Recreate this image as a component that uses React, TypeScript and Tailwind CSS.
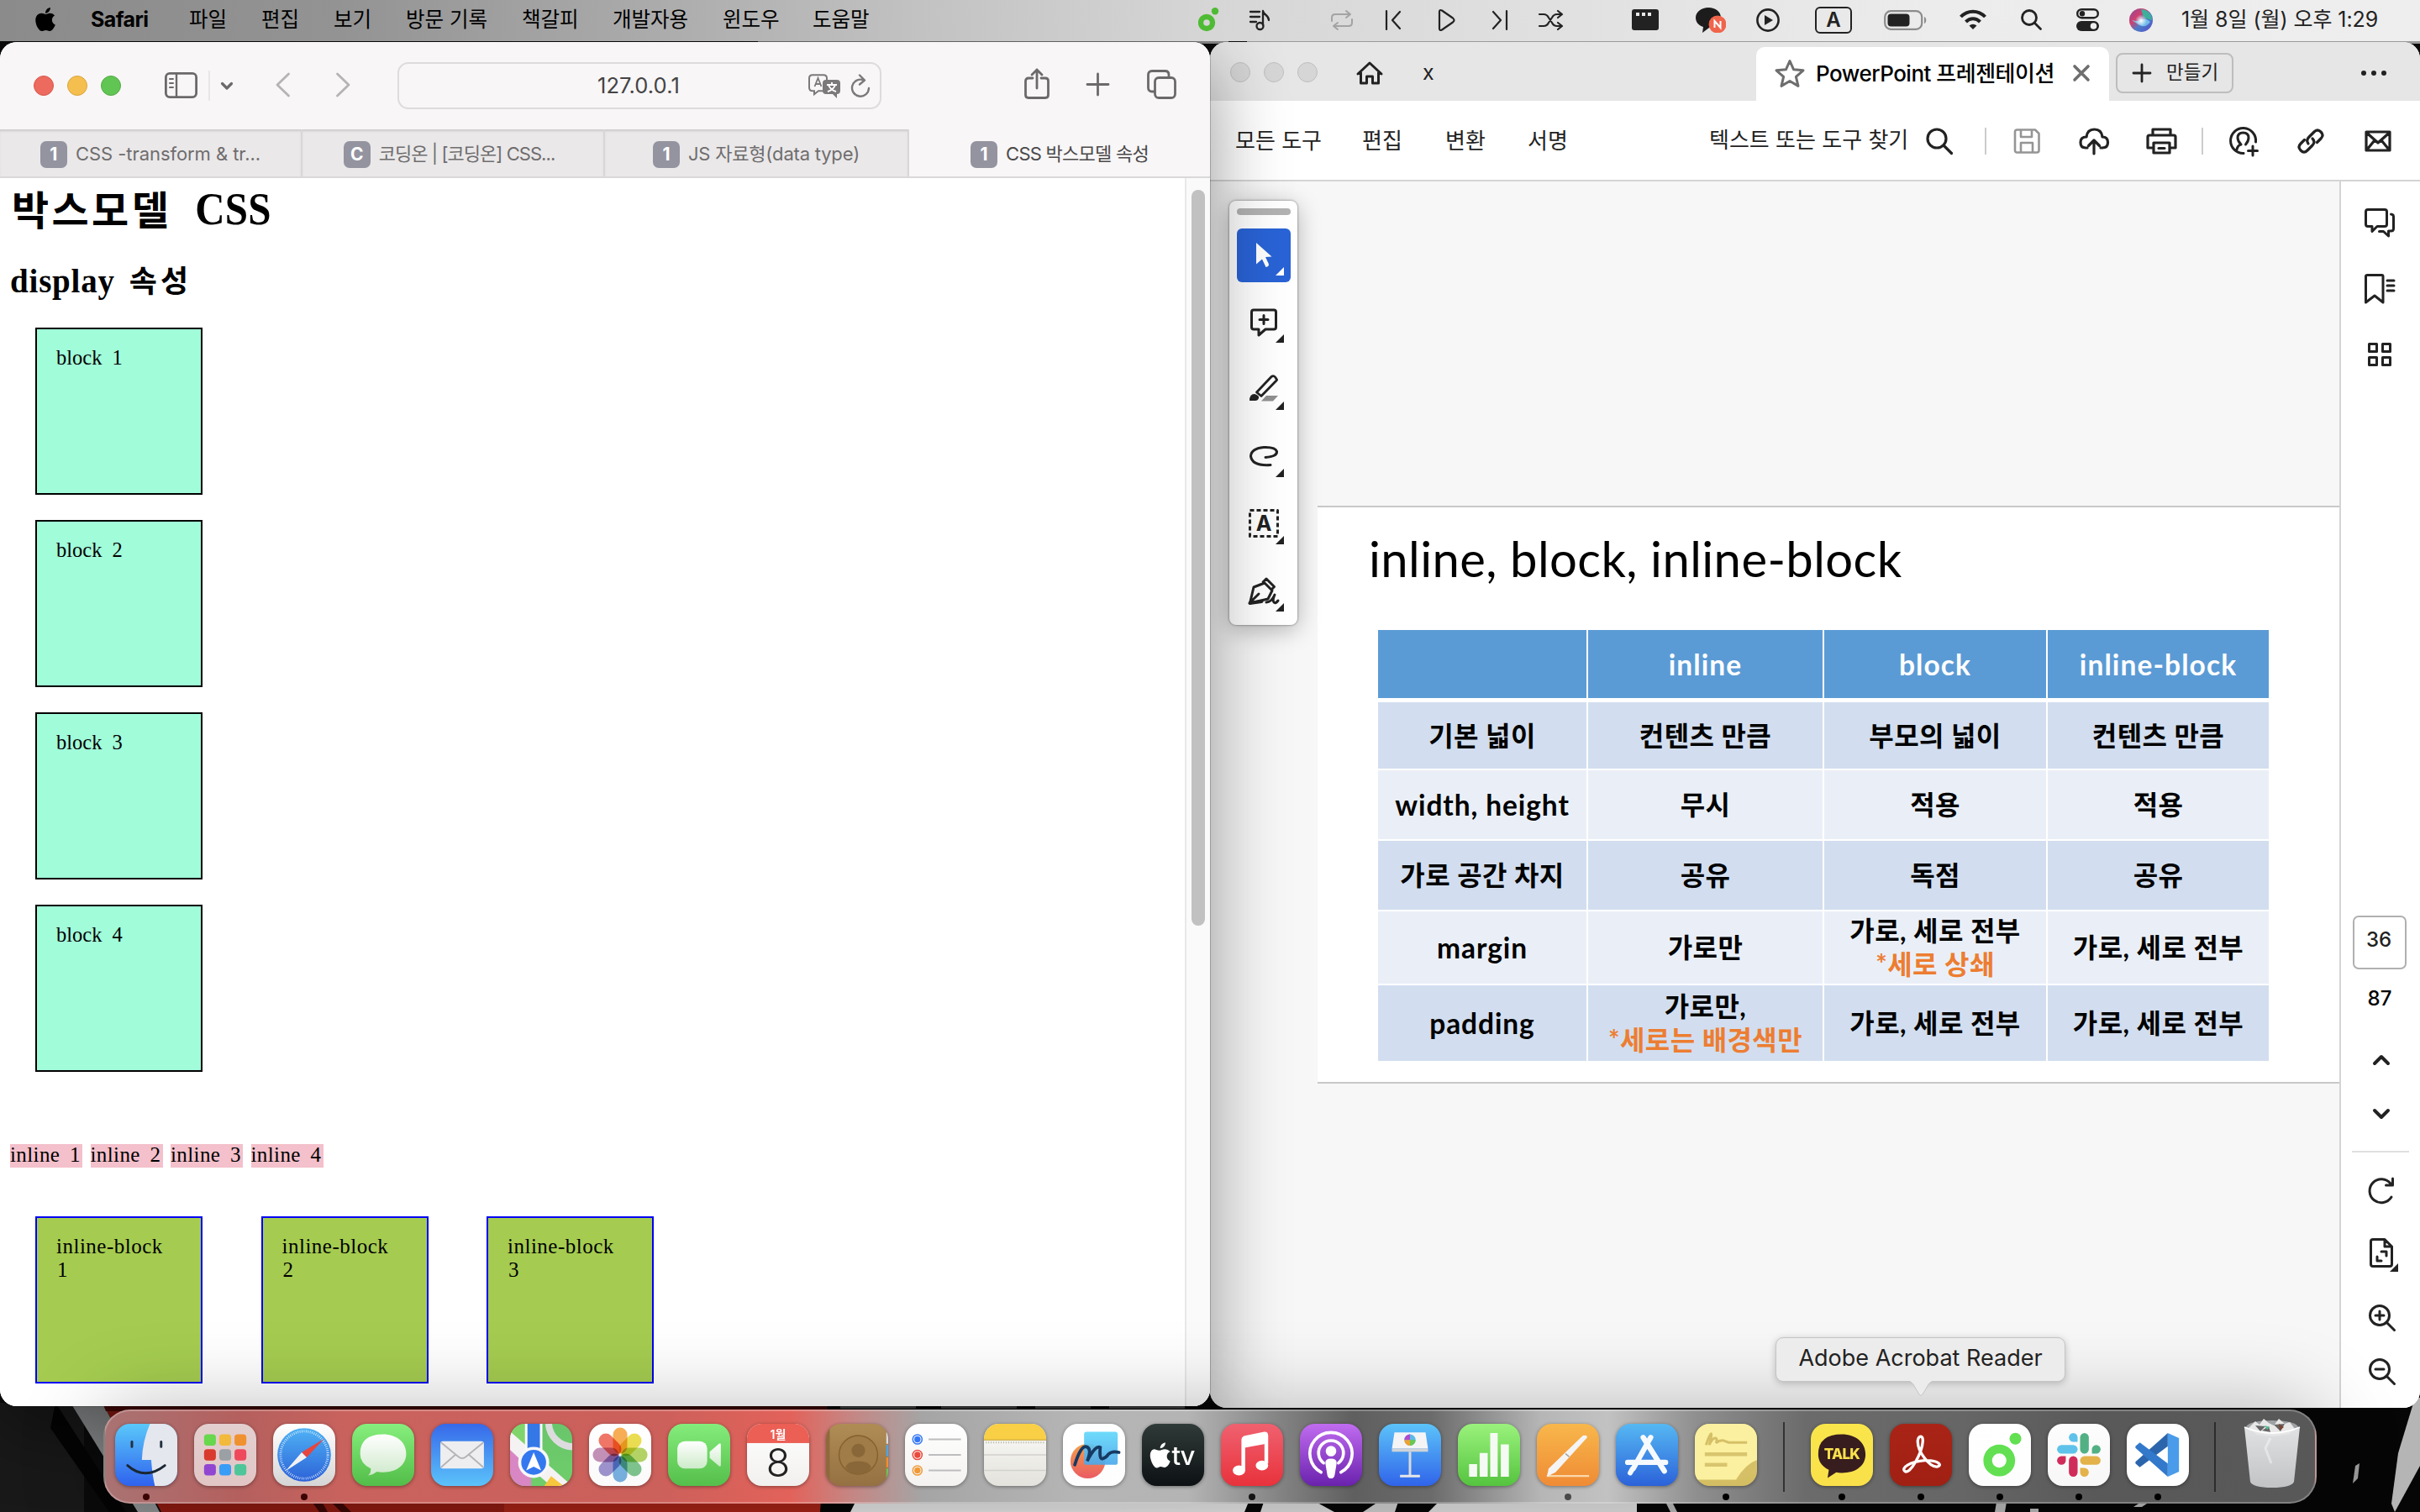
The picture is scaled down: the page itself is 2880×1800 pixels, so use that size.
import React from "react";
import { FaApple } from "react-icons/fa";

type IconProps = {
  w: number;
  h: number;
  sw?: number;
  className?: string;
  children: React.ReactNode;
};

/* Stroke icon whose drawing units are screen pixels. */
function Ico({ w, h, sw = 2.6, className = "", children }: IconProps) {
  return (
    <svg
      width={w}
      height={h}
      viewBox={`0 0 ${w} ${h}`}
      fill="none"
      stroke="currentColor"
      strokeWidth={sw}
      strokeLinecap="round"
      strokeLinejoin="round"
      className={`block shrink-0 overflow-visible ${className}`}
    >
      {children}
    </svg>
  );
}

/* ---------------------------------------------------------------- wallpaper */

function Wallpaper() {
  return (
    <svg className="absolute inset-0" width="2880" height="1800" viewBox="0 0 2880 1800">
      <rect width="2880" height="1800" fill="#0b0b0b" />
      <rect x="902" y="46" width="560" height="6" fill="#8a8a8a" />
      <rect x="1484" y="46" width="1396" height="6" fill="#9a9a9a" />
      <rect x="0" y="1670" width="100" height="130" fill="#191919" />
      <path d="M66 1670 L150 1800 L130 1800 L60 1700 Z" fill="#050505" />
      <path d="M84 1670 L122 1670 L190 1800 L164 1800 Z" fill="#8d8f90" />
      <path d="M122 1670 L985 1670 L978 1800 L192 1800 Z" fill="#8d1b12" />
      <path d="M122 1670 H985 V1680 H126 Z" fill="#4a0a07" />
      <path d="M600 1790 H978 V1800 H600 Z" fill="#a52417" />
      <path d="M370 1786 l10 14 h10 l-8 -14 Z M392 1786 l14 14 h12 l-14 -14 Z" fill="#3c0705" />
      <path d="M985 1670 H2880 V1800 H976 Z" fill="#060606" />
      <path d="M1000 1672 H1090 V1677 H1000 Z M1120 1672 H1210 V1677 H1120 Z M1232 1672 H1298 V1677 H1232 Z M1320 1672 H1410 V1677 H1320 Z" fill="#4c4c4c" />
      <path d="M1018 1788 H1486 L1481 1800 H1012 Z" fill="#e4e4e4" />
      <path d="M1504 1788 H1566 L1588 1800 H1500 Z" fill="#dcdcdc" />
      <path d="M1640 1788 H1664 L1660 1800 H1622 Z" fill="#d0d0d0" />
      <path d="M1712 1788 H1948 V1800 H1700 Z" fill="#e0e0e0" />
      <path d="M1982 1788 h8 l6 12 h-8 Z M2376 1788 h12 l-2 12 h-12 Z M2545 1790 h10 l-6 4 h-10 Z M2416 1796 h10 v4 h-10 Z" fill="#b9b9b9" />
      <path d="M2874 1664 L2880 1664 L2880 1745 L2850 1800 L2846 1790 L2854 1730 Z" fill="#b5b5b5" />
      <path d="M2803 1745 l5 -3 l-2 18 l-6 6 Z" fill="#9c9c9c" />
    </svg>
  );
}

/* ----------------------------------------------------------------- menu bar */

function MenuBar() {
  return (
    <header className="relative z-30 flex h-[49px] items-center bg-[linear-gradient(90deg,#8b8b8b_0%,#939393_14%,#a9a9a9_26%,#c2c2c2_38%,#d6d6d6_50%,#e0e0e0_64%,#ececec_80%,#eeeeee_100%)] pb-[2px] font-['Inter','Noto_Sans_CJK_KR',sans-serif] text-[24.5px] text-black">
      <FaApple className="ml-[40px] -mt-[2px] h-[32px] w-[28px]" />
      <b className="ml-[40px] w-[117px] text-[25px] tracking-[-0.6px]">Safari</b>
      <span className="w-[86px] whitespace-nowrap">파일</span>
      <span className="w-[86px] whitespace-nowrap">편집</span>
      <span className="w-[86px] whitespace-nowrap">보기</span>
      <span className="w-[138px] whitespace-nowrap">방문 기록</span>
      <span className="w-[108px] whitespace-nowrap">책갈피</span>
      <span className="w-[131px] whitespace-nowrap">개발자용</span>
      <span className="w-[107px] whitespace-nowrap">윈도우</span>
      <span className="w-[68px] whitespace-nowrap">도움말</span>

      <div className="ml-[391px] flex items-center text-[#222]">
        <svg width="25" height="29" viewBox="0 0 25 29" className="block">
          <circle cx="10" cy="18" r="7" fill="none" stroke="#4fbb35" strokeWidth="6.4" />
          <circle cx="20" cy="4.3" r="4.2" fill="#4fbb35" />
        </svg>
        <Ico w={25} h={24} sw={2.3} className="ml-[36px]">
          <path d="M1 2h11M1 8h11M1 14h7M16 18V1c1 5 7 5 7 11" />
          <circle cx="12.5" cy="19" r="4" />
        </Ico>
        <Ico w={28} h={22} sw={2} className="ml-[71px] text-[#a3a3a3]">
          <path d="M2 12V8q0-4 4-4h17M19 0l5 4-5 4M26 10v4q0 4-4 4H5M9 14l-5 4 5 4" />
        </Ico>
        <Ico w={19} h={22} sw={2.2} className="ml-[38px]">
          <path d="M1 0v22M17 1L8 11l9 10" />
        </Ico>
        <Ico w={20} h={26} sw={2.2} className="ml-[44px]">
          <path d="M1 3v20q0 3 3 1.500l13-9q3-2.500 0-5L4 1.500Q1 0 1 3Z" />
        </Ico>
        <Ico w={19} h={22} sw={2.2} className="ml-[43px]">
          <path d="M18 0v22M2 1l9 10-9 10" />
        </Ico>
        <Ico w={28} h={22} sw={2.2} className="ml-[38px]">
          <path d="M0 4h5q4 0 6 4l4 6q2 4 6 4h5M0 18h5q4 0 6-4l4-6q2-4 6-4h5M22 0l5 4-5 4M22 14l5 4-5 4" />
        </Ico>
        <svg width="32" height="25" viewBox="0 0 32 25" className="ml-[82px] block">
          <rect width="32" height="25" rx="3" fill="#222" />
          <path d="M5 4h4v4H5zM12 4h4v4h-4zM19 4h4v4h-4z" fill="#e8e8e8" />
        </svg>
        <svg width="36" height="30" viewBox="0 0 36 30" className="ml-[44px] block">
          <path d="M15 0c9 0 15 5 15 12s-6 12-14 12l-8 6 1-7C3 21 0 17 0 12 0 5 7 0 15 0Z" fill="#1c1c1c" />
          <circle cx="26" cy="20" r="10.500" fill="#f0644c" />
          <path d="M22.500 24v-8l7 8v-8" fill="none" stroke="#fff" strokeWidth="2" />
        </svg>
        <svg width="28" height="28" viewBox="0 0 28 28" className="ml-[36px] block">
          <circle cx="14" cy="14" r="12.600" fill="none" stroke="#222" strokeWidth="2.600" />
          <path d="M10 8l10 6-10 6Z" fill="#222" />
        </svg>
        <span className="ml-[42px] flex h-[32px] w-[44px] items-center justify-center rounded-[6px] border-[2.5px] border-[#222] text-[24px] font-semibold leading-none">
          A
        </span>
        <svg width="52" height="24" viewBox="0 0 52 24" className="ml-[38px] block">
          <rect x="1.200" y="1.200" width="44" height="21.600" rx="7" fill="none" stroke="#8c8c8c" strokeWidth="2.200" />
          <rect x="4.500" y="4.500" width="26" height="15" rx="4" fill="#222" />
          <path d="M48 8c3 1 3 7 0 8Z" fill="#8c8c8c" />
        </svg>
        <Ico w={34} h={25} sw={4} className="ml-[37px]">
          <path d="M2.500 9c8-8.500 21-8.500 29 0M8.500 15c5-5 12-5 17 0" strokeLinecap="butt" />
          <path d="M12.500 19.500q4.500-3.500 9 0L17 24Z" fill="currentColor" stroke="none" />
        </Ico>
        <Ico w={25} h={25} sw={2.8} className="ml-[40px]">
          <circle cx="10" cy="10" r="8.500" />
          <path d="M16.500 16.500l7 7" />
        </Ico>
        <svg width="27" height="27" viewBox="0 0 27 27" className="ml-[41px] block">
          <rect x="1.200" y="1.200" width="24.600" height="10" rx="5" fill="none" stroke="#222" strokeWidth="2.400" />
          <circle cx="7" cy="6.200" r="3.200" fill="#222" />
          <rect x="0" y="15" width="27" height="12" rx="6" fill="#222" />
          <circle cx="20.500" cy="21" r="3.800" fill="#eee" />
        </svg>
        <svg width="28" height="28" viewBox="0 0 28 28" className="ml-[36px] block">
          <defs>
            <linearGradient id="siri" x1="0" y1="0" x2="1" y2="1">
              <stop offset="0" stopColor="#8a4a9e" />
              <stop offset=".35" stopColor="#d0406e" />
              <stop offset=".6" stopColor="#4a7cc9" />
              <stop offset="1" stopColor="#5a49c8" />
            </linearGradient>
            <radialGradient id="siriGlow">
              <stop offset="0" stopColor="#fff" />
              <stop offset="1" stopColor="#fff" stopOpacity="0" />
            </radialGradient>
          </defs>
          <circle cx="14" cy="14" r="14" fill="url(#siri)" />
          <path d="M14 1a13 13 0 0 1 13 13l-10-3Z" fill="#3fae9a" />
          <path d="M3 14q8 2 11 0 5-4 11 2-6 8-12 4-6-3-10-6Z" fill="#7fd4f5" opacity=".75" />
          <circle cx="14" cy="14.500" r="7" fill="url(#siriGlow)" />
        </svg>
        <span className="ml-[34px] whitespace-nowrap text-[25px] tracking-[-0.05px]">1월 8일 (월) 오후 1:29</span>
      </div>
    </header>
  );
}

/* ------------------------------------------------------------ Safari window */

function Favicon({ label }: { label: string }) {
  return (
    <span className="mr-[10px] flex h-8 w-8 shrink-0 items-center justify-center rounded-[7px] bg-[#9494a0] text-[21px] font-bold text-white">
      {label}
    </span>
  );
}

const idleTab =
  "flex h-full items-center justify-center whitespace-nowrap border-r-2 border-[#d8d6d7] bg-[#eae8e9] pt-[3px] shadow-[inset_0_3px_3px_-1px_rgba(0,0,0,0.13)]";

function SafariToolbar() {
  return (
    <div className="flex h-[104px] shrink-0 items-center bg-[#f8f6f7] text-[#6b696a]">
      <div className="ml-[40px] flex gap-4">
        <i className="h-6 w-6 rounded-full border border-[#d8574c] bg-[#ed6a5e]" />
        <i className="h-6 w-6 rounded-full border border-[#dba53c] bg-[#f5bf4f]" />
        <i className="h-6 w-6 rounded-full border border-[#53ab43] bg-[#61c554]" />
      </div>
      <Ico w={39} h={31} sw={2.8} className="ml-[52px] -mt-[2px]">
        <rect x="1.400" y="1.400" width="36.200" height="28.200" rx="4.500" />
        <path d="M14 2v27" strokeWidth="2.400" />
        <path d="M6 8h4M6 13h4M6 18h4" strokeWidth="2" />
      </Ico>
      <i className="ml-[13px] h-9 w-[2px] bg-[#e8e6e7]" />
      <Ico w={14} h={9} sw={3.2} className="ml-[13px]">
        <path d="M1.500 1.500l5.500 5.500 5.500-5.500" />
      </Ico>
      <Ico w={17} h={28} sw={2.8} className="ml-[51px] -mt-[2px] text-[#b5b3b4]">
        <path d="M15.500 1L2 14l13.500 13" />
      </Ico>
      <Ico w={17} h={28} sw={2.8} className="ml-[55px] -mt-[2px] text-[#b5b3b4]">
        <path d="M1.500 1L15 14 1.500 27" />
      </Ico>
      <div className="ml-[56px] flex h-[56px] w-[576px] items-center rounded-[13px] border-2 border-[#dddbdc]">
        <span className="ml-[236px] w-[251px] pt-[1px] text-[25.5px] tracking-[0.1px] text-[#444]">127.0.0.1</span>
        <svg width="39" height="29" viewBox="0 0 39 29" className="block overflow-visible text-[#7b797a]">
          <path d="M5 1.200h13q4 0 4 4v11q0 4-4 4h-6l-5 4v-4H5q-4 0-4-4v-11q0-4 4-4Z" fill="none" stroke="currentColor" strokeWidth="2" />
          <path d="M7.500 15L11.500 5l4 10M9 12h5" fill="none" stroke="currentColor" strokeWidth="1.800" />
          <path d="M21 7h13q4 0 4 4v9q0 4-4 4v5l-5-5h-8q-4 0-4-4v-9q0-4 4-4Z" fill="currentColor" />
          <path d="M22 13h12M28 10v3M32 13q-2 6-9 8M24 13q2 6 9 8" fill="none" stroke="#fff" strokeWidth="1.900" />
        </svg>
        <Ico w={23} h={27} sw={2.4} className="ml-[12px] text-[#7b797a]">
          <path d="M21 16A10 10 0 1 1 15 6.500M10 0.500l6 6-6 5" />
        </Ico>
      </div>
      <Ico w={30} h={37} sw={2.8} className="ml-[170px] -mt-[6px]">
        <path d="M10 12H5q-3.500 0-3.500 3.500v16.500q0 3.500 3.500 3.500h20q3.500 0 3.500-3.500V15.500q0-3.500-3.500-3.500h-5M15 24V2M9 8l6-6 6 6" />
      </Ico>
      <Ico w={27} h={27} sw={2.8} className="ml-[44px] -mt-[4px]">
        <path d="M13.500 1v25M1 13.500h25" />
      </Ico>
      <Ico w={35} h={35} sw={2.8} className="ml-[45px] -mt-[4px]">
        <rect x="9.500" y="9.500" width="24" height="24" rx="4.500" />
        <path d="M9 26H6q-4.500 0-4.500-4.500V6q0-4.500 4.500-4.500h15.500q4.500 0 4.500 4.500v3" />
      </Ico>
    </div>
  );
}

function SafariTabs() {
  return (
    <div className="grid h-[58px] shrink-0 grid-cols-[360px_360px_362px_358px] border-b-2 border-[#dad8d9] bg-[#f8f6f7] text-[22px] text-[#6f6d6e]">
      <div className={idleTab}>
        <Favicon label="1" />
        <span className="tracking-[-0.05px]">CSS -transform &amp; tr...</span>
      </div>
      <div className={`${idleTab} pr-[9px]`}>
        <Favicon label="C" />
        <span className="tracking-[-0.95px]">코딩온 | [코딩온] CSS...</span>
      </div>
      <div className={idleTab}>
        <Favicon label="1" />
        <span className="tracking-[-0.2px]">JS 자료형(data type)</span>
      </div>
      <div className="flex h-full items-center justify-center whitespace-nowrap pt-[3px] text-[#4b494a]">
        <Favicon label="1" />
        <span className="tracking-[-0.75px]">CSS 박스모델 속성</span>
      </div>
    </div>
  );
}

function SafariPage() {
  return (
    <div className="flex min-h-0 flex-1 bg-white">
      <div className="flex-1 overflow-hidden pl-3 font-['Liberation_Serif','Noto_Sans_CJK_KR',serif] text-[24px] leading-[28px] text-black">
        <h1 className="mt-[10px] h-[60px] whitespace-nowrap text-[49px] font-bold leading-[60px]">
          <span className="pl-[2px] text-[48px] font-semibold tracking-[3.4px]">박스모델</span>
          <span className="ml-[28px] inline-block origin-bottom scale-y-110 tracking-[0.2px]">CSS</span>
        </h1>
        <h2 className="mt-[28px] h-[50px] whitespace-nowrap text-[39px] font-bold leading-[50px]">
          <span className="tracking-[0.8px]">display</span>
          <span className="ml-[17px] text-[36px] tracking-[4px]">속성</span>
        </h2>
        <div className="ml-[30px] mt-[30px] flex flex-col gap-[30px]">
          {[1, 2, 3, 4].map((n) => (
            <div key={n} className="h-[199px] w-[199px] border-2 border-black bg-[#a1fcda] pl-[23px] pt-[20px] text-[24.5px] [word-spacing:6px]">
              block {n}
            </div>
          ))}
        </div>
        <div className="mt-[86px] flex gap-[9.5px]">
          {[1, 2, 3, 4].map((n) => (
            <span key={n} className="h-[28px] w-[86px] whitespace-nowrap bg-[#f4c0cb] text-[25px] leading-[25px] tracking-[0.4px] [word-spacing:5px]">
              inline {n}
            </span>
          ))}
        </div>
        <div className="ml-[30px] mt-[58px] flex gap-[69.5px]">
          {[1, 2, 3].map((n) => (
            <div key={n} className="h-[199px] w-[199px] shrink-0 border-2 border-[#0000f5] bg-[#a5cc50] pl-[23px] pt-[20px] text-[25px]">
              <div className="tracking-[0.5px]">inline-block</div>
              <div className="pl-[1px]">{n}</div>
            </div>
          ))}
        </div>
      </div>
      <div className="w-[30px] border-l-2 border-[#e8e8e8] bg-[#fafafa] pl-[6px] pt-[14px]">
        <div className="h-[876px] w-4 rounded-full bg-[#c1c1c1]" />
      </div>
    </div>
  );
}

function SafariWindow() {
  return (
    <section className="relative z-20 flex h-[1624px] w-[1440px] flex-col overflow-hidden rounded-[20px] bg-white font-['Inter','Noto_Sans_CJK_KR',sans-serif] shadow-[0_24px_90px_rgba(0,0,0,0.42),0_0_0_1px_rgba(0,0,0,0.2)]">
      <SafariToolbar />
      <SafariTabs />
      <SafariPage />
    </section>
  );
}

/* ----------------------------------------------------------- Acrobat window */

function AcrobatTitleBar() {
  return (
    <div className="flex h-[70px] shrink-0 items-center bg-[#e6e6e6] pt-[4px] text-[#222]">
      <div className="-mt-[2px] ml-[24px] flex gap-4">
        <i className="h-6 w-6 rounded-full border border-[#bfbfbf] bg-[#d6d6d6]" />
        <i className="h-6 w-6 rounded-full border border-[#bfbfbf] bg-[#d6d6d6]" />
        <i className="h-6 w-6 rounded-full border border-[#bfbfbf] bg-[#d6d6d6]" />
      </div>
      <Ico w={32} h={28} sw={3} className="ml-[46px]">
        <path d="M2 15L16 2l14 13M5.500 13v13h7v-8h7v8h7V13" />
      </Ico>
      <span className="ml-[47px] -mt-[1px] w-[397px] text-[25px]">x</span>
      <div className="flex h-[64px] w-[420px] items-center self-end rounded-t-[10px] bg-white pb-[2px] text-[26px] text-black">
        <Ico w={36} h={34} sw={3} className="ml-[22px] text-[#6e6e6e]">
          <path d="M18 2.500l4.600 10.300 11.400 1-8.600 7.600 2.600 11L18 26.500 8 32.400l2.600-11L2 13.800l11.400-1Z" />
        </Ico>
        <span className="ml-[13px] w-[288px] whitespace-nowrap font-medium tracking-[-0.5px]">PowerPoint 프레젠테이션</span>
        <Ico w={20} h={20} sw={3.6} className="ml-[18px] text-[#6e6e6e]">
          <path d="M2 2l16 16M18 2L2 18" />
        </Ico>
      </div>
      <div className="ml-[8px] flex h-[48px] w-[140px] items-center rounded-[8px] border-2 border-[#bdbdbd] text-[22.5px]">
        <Ico w={20} h={20} sw={2.8} className="ml-[19px]">
          <path d="M10 0v20M0 10h20" />
        </Ico>
        <span className="-mt-[2px] ml-[19px] whitespace-nowrap">만들기</span>
      </div>
      <div className="ml-[152px] flex gap-[6px]">
        <i className="h-[6px] w-[6px] rounded-full bg-[#222]" />
        <i className="h-[6px] w-[6px] rounded-full bg-[#222]" />
        <i className="h-[6px] w-[6px] rounded-full bg-[#222]" />
      </div>
    </div>
  );
}

function AcrobatToolbar() {
  return (
    <div className="flex h-[96px] shrink-0 items-center border-b-2 border-[#d4d4d4] bg-white pt-[2px] text-[26px] text-[#222]">
      <span className="-mt-[2px] ml-[30px] w-[151px] whitespace-nowrap">모든 도구</span>
      <span className="-mt-[2px] w-[99px] whitespace-nowrap">편집</span>
      <span className="-mt-[2px] w-[98px] whitespace-nowrap">변환</span>
      <span className="-mt-[2px] w-[216px] whitespace-nowrap">서명</span>
      <span className="-mt-[4px] w-[258px] whitespace-nowrap">텍스트 또는 도구 찾기</span>
      <Ico w={32} h={32} sw={3.2}>
        <circle cx="13" cy="13" r="11" />
        <path d="M21 21l9.500 9.500" />
      </Ico>
      <i className="ml-[38px] h-8 w-[2px] bg-[#ccc]" />
      <Ico w={32} h={30} sw={2.6} className="ml-[32px] text-[#959595]">
        <path d="M2 4q0-2.500 2.500-2.500H26l4.500 4.500v20q0 2.500-2.500 2.500H4.500Q2 28.500 2 26ZM9 2v8h13V2M9 28V17h14v11" />
      </Ico>
      <Ico w={36} h={33} sw={3.2} className="ml-[46px]">
        <path d="M10 24H8q-6 0-6-6.500T9 11q1-9 9.500-9T28 11q6.500 0 6.500 6.500T28 24h-2M18 31V15M11.500 21.500L18 15l6.500 6.500" />
      </Ico>
      <Ico w={37} h={32} sw={3.2} className="ml-[44px]">
        <path d="M8 9V2h21v7M8 24H2V11q0-2 2-2h29q2 0 2 2v13h-6M9 18h19v12H9ZM15 24.500h7" />
      </Ico>
      <i className="ml-[29px] h-8 w-[2px] bg-[#ccc]" />
      <Ico w={36} h={35} sw={3} className="ml-[31px]">
        <path d="M17 31.500A15 15 0 1 1 31.500 18M9 27q1-5 5-6-4-4-4-8 0-6 6.500-6T23 13q0 4-3.500 8M28 23v11M22.500 28.500h11" />
      </Ico>
      <Ico w={34} h={32} sw={3.2} className="ml-[44px]">
        <path d="M14 19q-3-4 1-8l6-6q4-4 8 0t0 8l-4.500 4.500M19 13q4 4 0 8l-6 6q-4 4-8 0t0-8l4.500-4.500" />
      </Ico>
      <Ico w={32} h={26} sw={3.2} className="ml-[47px]">
        <path d="M2 2h28v22H2ZM2.500 3L16 15 29.500 3M3 23l9-11M29 23l-9-11" />
      </Ico>
    </div>
  );
}

function Corner({ className = "text-[#222]" }: { className?: string }) {
  return (
    <svg width="10" height="10" viewBox="0 0 10 10" className={`absolute bottom-2 right-2 ${className}`}>
      <path d="M10 0v10H0Z" fill="currentColor" />
    </svg>
  );
}

const toolCell = "relative flex h-16 w-16 items-center justify-center text-[#222]";

function ToolPalette() {
  return (
    <div className="absolute left-[23px] top-[23px] flex h-[505px] w-[81px] flex-col items-center rounded-[8px] bg-white pt-[9px] shadow-[0_0_2px_1px_rgba(0,0,0,0.25),0_6px_28px_rgba(0,0,0,0.28)]">
      <i className="h-2 w-16 rounded-full bg-[#b2b2b2]" />
      <div className="mt-4 flex flex-col gap-4">
        <div className="relative flex h-16 w-16 items-center justify-center rounded-[6px] bg-[#2963d6]">
          <svg width="20" height="30" viewBox="0 0 20 30" className="block">
            <path d="M1 0l18.500 16.500-7.500.5 4 8.500q0 3-3.500 3.500L8 19.500 1 25.500Z" fill="#fff" />
          </svg>
          <Corner className="text-white" />
        </div>
        <div className={toolCell}>
          <Ico w={32} h={34} sw={3} className="-mt-[1px]">
            <path d="M4 2h24q2.500 0 2.500 2.500v18Q30.500 25 28 25H18l-8 7v-7H4q-2.500 0-2.500-2.500v-18Q1.500 2 4 2Z" />
            <path d="M16 8.500v10M11 13.500h10" />
          </Ico>
          <Corner />
        </div>
        <div className={toolCell}>
          <Ico w={34} h={32} sw={2.800} className="-mt-[4px]">
            <path d="M8.500 21L26 2.500q3-2 5 1t1.500 3L14 25.500Z" />
            <path d="M0 31q0-8 6-8 6 2 5 5-1 3-4 3Z" fill="currentColor" stroke="none" />
            <path d="M20 25h14l-6 6.500H14Z" fill="#909090" stroke="none" />
          </Ico>
          <Corner />
        </div>
        <div className={toolCell}>
          <Ico w={34} h={24} sw={3} className="-mt-[2px]">
            <path d="M19 13.500q14-1 13.500-7Q31 1 17 1.500 2 3 1.500 12 3 24 25 22.500" />
          </Ico>
          <Corner />
        </div>
        <div className={toolCell}>
          <Ico w={36} h={34} sw={3} className="-mt-[2px]">
            <rect x="1.500" y="1.500" width="33" height="31" strokeDasharray="5 3" strokeLinecap="butt" />
            <text x="18" y="26" fontSize="25" fontWeight="700" textAnchor="middle" fill="currentColor" stroke="none">A</text>
          </Ico>
          <Corner />
        </div>
        <div className={toolCell}>
          <Ico w={36} h={32} sw={3} className="-mt-[1px]">
            <path d="M1.500 30L6 11l13-5L28 15l-5 10ZM2 29l10-10M17 5l4-4 9.500 9.500L27 14M21 29q6 0 10-9-3 7-1 9t5-2" />
            <path d="M1.500 30l14-2" strokeWidth="4" />
          </Ico>
          <Corner />
        </div>
      </div>
    </div>
  );
}

const slideTone = ["bg-[#d2deef]", "bg-[#eaeff7]"];
const slideRows: { height: string; cells: string[][] }[] = [
  { height: "h-[79px]", cells: [["기본 넓이"], ["컨텐츠 만큼"], ["부모의 넓이"], ["컨텐츠 만큼"]] },
  { height: "h-[82px]", cells: [["width, height"], ["무시"], ["적용"], ["적용"]] },
  { height: "h-[82px]", cells: [["가로 공간 차지"], ["공유"], ["독점"], ["공유"]] },
  { height: "h-[86px]", cells: [["margin"], ["가로만"], ["가로, 세로 전부", "*세로 상쇄"], ["가로, 세로 전부"]] },
  { height: "h-[90px]", cells: [["padding"], ["가로만,", "*세로는 배경색만"], ["가로, 세로 전부"], ["가로, 세로 전부"]] },
];
const slideCols = "grid grid-cols-[248px_279px_264px_263px] gap-[2px]";
const latin = /^[a-z, ]+$/;

function Slide() {
  return (
    <div className="ml-[128px] mt-[386px] h-[688px] border-y-2 border-[#c8c8c8] bg-white pl-[72px] font-['Lato','Noto_Sans_CJK_KR',sans-serif]">
      <h2 className="-ml-[11px] mt-[21px] h-[80px] whitespace-nowrap text-[58px] leading-[80px] tracking-[0.4px] text-black">
        inline, block, inline-block
      </h2>
      <div className="mt-[45px] flex w-[1060px] flex-col text-[32px] font-bold leading-[40px] text-black">
        <div className={`${slideCols} mb-[5px] h-[81px] text-white`}>
          {["", "inline", "block", "inline-block"].map((t, i) => (
            <div key={i} className="flex items-center justify-center bg-[#5b9bd5] text-[33.5px] tracking-[1.1px]">
              {t}
            </div>
          ))}
        </div>
        <div className="flex flex-col gap-[2px]">
          {slideRows.map((row, r) => (
            <div key={r} className={`${slideCols} ${row.height}`}>
              {row.cells.map((lines, c) => (
                <div key={c} className={`flex flex-col items-center justify-center whitespace-nowrap ${slideTone[r % 2]}`}>
                  {lines.map((line, i) => (
                    <span
                      key={i}
                      className={i ? "tracking-[0.4px] text-[#ed7d31]" : latin.test(line) ? "text-[33.5px] tracking-[0.9px]" : "tracking-[0.4px]"}
                    >
                      {line}
                    </span>
                  ))}
                </div>
              ))}
            </div>
          ))}
        </div>
      </div>
    </div>
  );
}

function RightRail() {
  return (
    <aside className="flex w-[96px] shrink-0 flex-col border-l-2 border-[#d4d4d4] bg-white text-[#222]">
      <Ico w={36} h={35} sw={3} className="ml-[28px] mt-[32px]">
        <path d="M4 1.500h20q2.500 0 2.500 2.500v15q0 2.500-2.500 2.500h-9l-6 6v-6H4q-2.500 0-2.500-2.500V4Q1.500 1.500 4 1.500ZM31.500 7q3 0 3 3v14q0 3-3 3h-3v6l-6-5.500-5 0" />
      </Ico>
      <Ico w={36} h={36} sw={3} className="ml-[28px] mt-[43px]">
        <path d="M3.500 1.500h17q1.500 0 1.500 1.500v31L12 26 1.500 34V3q0-1.500 2-1.500ZM27 8h8M27 14h8M27 20h8" />
      </Ico>
      <Ico w={28} h={28} sw={3} className="ml-[32px] mt-[46px]">
        <path d="M1.500 1.500h9v9h-9ZM17.500 1.500h9v9h-9ZM1.500 17.500h9v9h-9ZM17.500 17.500h9v9h-9Z" />
      </Ico>
      <div className="ml-[14px] mt-[654px] flex h-16 w-16 items-center justify-center rounded-[7px] border-2 border-[#b0b0b0] pb-[6px] pr-[2px] text-[24px] font-medium">
        36
      </div>
      <div className="ml-[14px] mt-[15px] flex h-[40px] w-16 items-center justify-center text-[24px] font-medium text-black">87</div>
      <Ico w={20} h={12} sw={4} className="ml-[38px] mt-[47px]">
        <path d="M2 10l8-8 8 8" />
      </Ico>
      <Ico w={20} h={12} sw={4} className="ml-[38px] mt-[52px]">
        <path d="M2 2l8 8 8-8" />
      </Ico>
      <i className="ml-[13px] mt-[38px] h-[2px] w-[68px] bg-[#e0e0e0]" />
      <Ico w={32} h={32} sw={3} className="ml-[32px] mt-[29px]">
        <path d="M28 24A14 14 0 1 1 27 8M29.500 2v8h-8" />
      </Ico>
      <div className="relative ml-[34px] mt-[41px] h-[40px] w-[34px]">
        <Ico w={28} h={34} sw={3}>
          <path d="M4 1.500h14l8.500 8.500v21q0 2.500-2.500 2.500H4q-2.500 0-2.500-2.500V4Q1.500 1.500 4 1.500ZM18 2v8h8M14 16h6v5M9 22v5h5" />
        </Ico>
        <svg width="10" height="10" viewBox="0 0 10 10" className="absolute bottom-0 right-0">
          <path d="M10 0v10H0Z" fill="currentColor" />
        </svg>
      </div>
      <Ico w={32} h={32} sw={3} className="ml-[33px] mt-[39px]">
        <path d="M21 21l9.500 9.500M13 8v10M8 13h10" />
        <circle cx="13" cy="13" r="11.500" />
      </Ico>
      <Ico w={32} h={32} sw={3} className="ml-[33px] mt-[32px]">
        <path d="M21 21l9.500 9.500M8 13h10" />
        <circle cx="13" cy="13" r="11.500" />
      </Ico>
    </aside>
  );
}

function AcrobatWindow() {
  return (
    <section className="relative z-10 flex h-[1626px] w-[1440px] flex-col overflow-hidden rounded-[20px] bg-white font-['Inter','Noto_Sans_CJK_KR',sans-serif]">
      <AcrobatTitleBar />
      <AcrobatToolbar />
      <div className="flex min-h-0 flex-1">
        <div className="relative flex-1 overflow-hidden bg-[#f7f7f7]">
          <Slide />
          <ToolPalette />
        </div>
        <RightRail />
      </div>
    </section>
  );
}

/* --------------------------------------------------------------------- dock */

function Grad({ id, a, b }: { id: string; a: string; b: string }) {
  return (
    <linearGradient id={id} x1="0" y1="0" x2="0" y2="1">
      <stop offset="0" stopColor={a} />
      <stop offset="1" stopColor={b} />
    </linearGradient>
  );
}

type TileProps = { id: string; a: string; b: string; children?: React.ReactNode };

/* Rounded application tile drawn on a 100-unit square. */
function Tile({ id, a, b, children }: TileProps) {
  return (
    <svg width="74" height="74" viewBox="0 0 100 100" className="block overflow-visible drop-shadow-[0_1px_2px_rgba(0,0,0,0.4)]">
      <defs>
        <Grad id={`g-${id}`} a={a} b={b} />
        <clipPath id={`c-${id}`}>
          <rect width="100" height="100" rx="24" />
        </clipPath>
      </defs>
      <g clipPath={`url(#c-${id})`}>
        <rect width="100" height="100" fill={`url(#g-${id})`} />
        {children}
      </g>
    </svg>
  );
}

function DockItem({ running, dot = "bg-black", children }: { running?: boolean; dot?: string; children: React.ReactNode }) {
  return (
    <div className="flex w-[94px] shrink-0 flex-col items-center pt-[15px]">
      {children}
      {running && <i className={`mt-[9px] h-2 w-2 rounded-full ${dot}`} />}
    </div>
  );
}

const petals = ["#f59c2f", "#e8d72c", "#a5cc45", "#63b876", "#5aa0dc", "#8a7cc4", "#b879a8", "#ee5846"];
const launchpad = ["#67d74c", "#f2b93a", "#f0912f", "#d93a2e", "#9aa0a4", "#ee4a5c", "#9146d1", "#3a9df5", "#4fc59a"];

function Dock() {
  return (
    <footer className="relative ml-[123px] mt-[2px] flex h-[112px] w-[2634px] rounded-[32px] border-2 border-white/25 bg-[linear-gradient(90deg,#a97373_0%,#b4605e_6%,#c9625d_11%,#cc605b_25%,#e2625a_31%,#c88380_33.500%,#a5a5a5_37%,#b5b5b5_44%,#b4b4b4_49%,#858585_53%,#5f5f5f_56.500%,#6b6b6b_60%,#b6b6b6_65%,#c2c2c2_68%,#8f8f8f_72%,#6b6b6b_77%,#666_84%,#595959_90%,#585858_100%)] pl-[2px] font-['Inter','Noto_Sans_CJK_KR',sans-serif] shadow-[0_0_100px_rgba(0,0,0,0.28)]">
      <DockItem running dot="bg-[#3a0505]">
        <Tile id="finder" a="#5ac8fa" b="#2f62ee">
          <path d="M56 0H100V100H64Q60 84 58 58H43Q44 28 56 0Z" fill="#e4e7ee" />
          <path d="M27 29v8M74 29v8" stroke="#22303f" strokeWidth="4" strokeLinecap="round" />
          <path d="M20 67Q48 92 80 67" fill="none" stroke="#1b2733" strokeWidth="4" strokeLinecap="round" />
        </Tile>
      </DockItem>
      <DockItem>
        <Tile id="launch" a="#e3cfcf" b="#e2c6c6">
          {launchpad.map((c, i) => (
            <rect key={c} x={16 + (i % 3) * 24.500} y={17 + Math.floor(i / 3) * 24} width="19" height="18" rx="5" fill={c} />
          ))}
        </Tile>
      </DockItem>
      <DockItem running dot="bg-[#3a0505]">
        <Tile id="safari" a="#ffffff" b="#d5d5d5">
          <defs>
            <Grad id="sf" a="#4fb2f4" b="#2c62d8" />
          </defs>
          <circle cx="50" cy="50" r="43" fill="url(#sf)" />
          <circle cx="50" cy="50" r="38" fill="none" stroke="#e5f2ff" strokeWidth="4" strokeDasharray="1 2.300" />
          <path d="M82 24L46 46l8 8Z" fill="#e8453c" />
          <path d="M20 76L46 46l8 8Z" fill="#f2f2f2" />
        </Tile>
      </DockItem>
      <DockItem>
        <Tile id="msg" a="#86ef7d" b="#53bd49">
          <defs>
            <Grad id="ms" a="#ffffff" b="#cfe9cb" />
          </defs>
          <path d="M50 17c22 0 37 13 37 31S72 78 50 78q-6 0-10-1-6 5-14 6 5-5 4-11-17-8-17-24 0-31 37-31Z" fill="url(#ms)" />
        </Tile>
      </DockItem>
      <DockItem>
        <Tile id="mail" a="#3769ea" b="#5bc3fa">
          <rect x="15" y="28" width="70" height="44" rx="4" fill="#eeeef0" />
          <path d="M16 70L40 49M84 70L60 49M16 30L44 53q6 5 12 0L84 30" fill="none" stroke="#b4b4b8" strokeWidth="2.500" />
        </Tile>
      </DockItem>
      <DockItem>
        <Tile id="maps" a="#69c56b" b="#6fce6a">
          <path d="M0 0H30V40L0 20Z" fill="#7fd56b" />
          <path d="M0 12L100 100H66L0 44Z" fill="#f4f2f3" />
          <path d="M0 42L34 74V100H0Z" fill="#d986c4" />
          <path d="M55 100L66 84 86 100Z" fill="#f6c63e" />
          <path d="M24 0H52V60L24 60Z" fill="#fafafa" />
          <path d="M28 0H48V60H28Z" fill="#3478e8" />
          <path d="M62 0a40 40 0 0 0 38 37" fill="none" stroke="#dcdcde" strokeWidth="11" />
          <circle cx="38" cy="62" r="25" fill="#f7f7f9" />
          <circle cx="38" cy="62" r="20" fill="#3478f0" />
          <path d="M38 46L50 75 38 69 26 75Z" fill="#fff" />
        </Tile>
      </DockItem>
      <DockItem>
        <Tile id="photos" a="#ffffff" b="#fafafa">
          {petals.map((c, i) => (
            <rect key={c} x="38.500" y="6" width="23" height="42" rx="11.500" fill={c} opacity=".82" transform={`rotate(${i * 45} 50 50)`} className="mix-blend-multiply" />
          ))}
        </Tile>
      </DockItem>
      <DockItem>
        <Tile id="facetime" a="#84ec7b" b="#55bf4b">
          <defs>
            <Grad id="ft" a="#ffffff" b="#cdebc9" />
          </defs>
          <rect x="15" y="28" width="48" height="44" rx="12" fill="url(#ft)" />
          <path d="M67 45L82 32q3-2 3 2v32q0 4-3 2L67 55Z" fill="url(#ft)" />
        </Tile>
      </DockItem>
      <DockItem>
        <Tile id="cal" a="#ffffff" b="#f1f0ee">
          <rect width="100" height="31" fill="#ec5f55" />
          <text x="50" y="24" fontSize="19" fontWeight="600" textAnchor="middle" fill="#fff">1월</text>
          <text x="50" y="85" fontSize="63" fontWeight="300" textAnchor="middle" fill="#222">8</text>
        </Tile>
      </DockItem>
      <DockItem>
        <Tile id="contacts" a="#b08c55" b="#957042">
          <path d="M0 0h6v100H0Z" fill="#8d693c" />
          <path d="M97 14h3v18h-3Z" fill="#ddd" />
          <path d="M97 34h3v18h-3Z" fill="#4aa6e8" />
          <path d="M97 54h3v16h-3Z" fill="#f09030" />
          <path d="M97 72h3v16h-3Z" fill="#6fc45a" />
          <circle cx="52" cy="50" r="31" fill="#a07c48" stroke="#84622f" strokeWidth="2" />
          <circle cx="52" cy="43" r="11" fill="#8a6738" />
          <path d="M31 70q4-10 21-10t21 10q-8 11-21 11T31 70Z" fill="#8a6738" />
        </Tile>
      </DockItem>
      <DockItem>
        <Tile id="rem" a="#ffffff" b="#f3f2f0">
          {["#3478f6", "#ea4a3d", "#f09a37"].map((c, i) => (
            <g key={c}>
              <circle cx="20" cy={25 + i * 25} r="7.500" fill="none" stroke={c} strokeWidth="2" />
              <circle cx="20" cy={25 + i * 25} r="5" fill={c} />
              <path d={`M38 ${25 + i * 25}H90`} stroke="#bdbdbd" strokeWidth="2.500" />
            </g>
          ))}
        </Tile>
      </DockItem>
      <DockItem>
        <Tile id="notes" a="#fbfbf8" b="#e3e2dc">
          <rect width="100" height="26" fill="#f8cf45" />
          <path d="M0 26H100" stroke="#c2a23a" strokeWidth="1.500" />
          <path d="M3 30H98" stroke="#b9b6a8" strokeWidth="2.500" strokeDasharray="1.500 2.500" />
          <path d="M0 50H100M0 75H100" stroke="#d2d1cd" strokeWidth="2" />
        </Tile>
      </DockItem>
      <DockItem>
        <Tile id="freeform" a="#ffffff" b="#fdfdfd">
          <defs>
            <Grad id="ff1" a="#62d8fb" b="#4aa8ea" />
            <Grad id="ff2" a="#f6a04a" b="#ea5b63" />
          </defs>
          <circle cx="40" cy="60" r="28" fill="url(#ff2)" />
          <rect x="34" y="13" width="54" height="53" rx="4" fill="url(#ff1)" opacity=".92" />
          <path d="M19 66Q29 34 38 37t1 23q14-27 21-22-2 20 4 18 6-2 9-7 6-6 17-3" fill="none" stroke="#163a63" strokeWidth="5" strokeLinecap="round" />
        </Tile>
      </DockItem>
      <DockItem>
        <Tile id="tv" a="#2f3b38" b="#0d1114">
          <g transform="translate(13 31) scale(1.08)">
            <path d="M22 9c-4 0-5 2-8 2S8 9 6 9C1 10-1 16 1 24s6 13 9 13 3-2 6-2 4 2 7 1 6-5 7-9c-7-3-6-12 0-14-2-3-5-4-8-4ZM15 8q0-7 8-9 0 7-8 9Z" fill="#fff" />
          </g>
          <text x="66" y="66" fontSize="42" fontWeight="500" textAnchor="middle" fill="#fff" letterSpacing="-1.500">tv</text>
        </Tile>
      </DockItem>
      <DockItem running dot="bg-[#151515]">
        <Tile id="music" a="#f0616f" b="#e8323c">
          <path d="M36 76V26q0-3 3-4l31-6q3 0 3 3v45" fill="none" stroke="#fff" strokeWidth="6" />
          <path d="M36 24L73 17V32L36 39Z" fill="#fff" />
          <ellipse cx="29" cy="75" rx="10" ry="8" fill="#fff" />
          <ellipse cx="66" cy="67" rx="10" ry="8" fill="#fff" />
        </Tile>
      </DockItem>
      <DockItem>
        <Tile id="podcasts" a="#c06cf0" b="#6a22ad">
          <path d="M34 78a34 34 0 1 1 32 0M38 63a20 20 0 1 1 24 0" fill="none" stroke="#fff" strokeWidth="5" strokeLinecap="round" />
          <circle cx="50" cy="44" r="8.500" fill="#fff" />
          <path d="M50 56q10 0 9 8l-3 18q-1 6-6 6t-6-6l-3-18q-1-8 9-8Z" fill="#fff" />
        </Tile>
      </DockItem>
      <DockItem>
        <Tile id="keynote" a="#5cc3f9" b="#3064ea">
          <path d="M25 14H75L79 40H21Z" fill="#f4f4f6" />
          <path d="M21 40H79V45H21Z" fill="#cfd3d8" />
          <circle cx="50" cy="26" r="9" fill="#5db9e6" />
          <path d="M50 17a9 9 0 0 0-9 9h9Z" fill="#b04ad0" />
          <path d="M41 26a9 9 0 0 0 9 9v-9Z" fill="#f0a030" />
          <path d="M50 35a9 9 0 0 0 9-9h-9Z" fill="#6ac84e" />
          <path d="M50 45V84" stroke="#d7dade" strokeWidth="4" />
          <path d="M34 82H66V86H34Z" fill="#e6e6e8" />
        </Tile>
      </DockItem>
      <DockItem>
        <Tile id="numbers" a="#9af27c" b="#55c43f">
          <path d="M18 65h13v20H18ZM35 47h13v38H35ZM52 15h12v70H52ZM69 33h13v52H69Z" fill="#f5fbf4" />
        </Tile>
      </DockItem>
      <DockItem running dot="bg-[#4a4a4a]">
        <Tile id="pages" a="#f8b74b" b="#ef8b35">
          <path d="M16 84H84" stroke="#fbd7a8" strokeWidth="3" />
          <path d="M74 19q7-2 7 3L30 78 16 85 19 72Z" fill="#f4f4f4" />
          <path d="M46 48l6 5" stroke="#999" strokeWidth="2" />
        </Tile>
      </DockItem>
      <DockItem>
        <Tile id="appstore" a="#56b8f3" b="#2b62d9">
          <path d="M56 22L28 72M44 22L78 76M19 62H80" stroke="#f6fafe" strokeWidth="8.500" strokeLinecap="round" />
          <path d="M27 72l-4 7" stroke="#f6fafe" strokeWidth="8" strokeLinecap="round" />
        </Tile>
      </DockItem>
      <DockItem running>
        <Tile id="stickies" a="#e2ce74" b="#d3bd63">
          <path d="M0 0H100V58Q88 86 66 90H0Z" fill="#fbf0a0" />
          <path d="M100 58Q82 64 66 90 92 88 100 58Z" fill="#d5c067" />
          <path d="M18 34q6-18 8-18t-3 18q6-12 10-11t1 8q6-5 12-4l8 3H84" fill="none" stroke="#d5c067" strokeWidth="4" />
          <path d="M16 49H84M16 66H52" stroke="#d9c56e" strokeWidth="6" />
        </Tile>
      </DockItem>
      <div className="flex w-[44px] shrink-0 justify-center pt-[13px]">
        <i className="h-[83px] w-[2px] bg-[#333]" />
      </div>
      <DockItem running>
        <Tile id="kakao" a="#f9e64b" b="#f9e04a">
          <path d="M50 17c22 0 38 13 38 32S72 79 50 79q-6 0-9-1L27 87l2-13Q12 66 12 49q0-32 38-32Z" fill="#371d1e" />
          <text x="50" y="57" fontSize="23" fontWeight="800" textAnchor="middle" fill="#f9e14b" letterSpacing="-1">TALK</text>
        </Tile>
      </DockItem>
      <DockItem running>
        <Tile id="acrobat" a="#a92416" b="#a02013">
          <path d="M24 76c-6-5 8-15 32-17 24-1 29 9 20 10C64 70 44 44 45 27c1-9 9-9 8 2C52 46 32 84 24 76Z" fill="none" stroke="#fff" strokeWidth="4.500" strokeLinejoin="round" />
        </Tile>
      </DockItem>
      <DockItem running>
        <Tile id="green" a="#ffffff" b="#fdfdfd">
          <circle cx="49" cy="59" r="18.500" fill="none" stroke="#62e052" strokeWidth="14" />
          <circle cx="75" cy="24" r="9.500" fill="#62e052" />
        </Tile>
      </DockItem>
      <DockItem running>
        <Tile id="slack" a="#fdfdfd" b="#f7f7f7">
          <g strokeWidth="14" strokeLinecap="round">
            <path d="M22 41H41" stroke="#5fc2ea" />
            <path d="M59 22V41" stroke="#52b184" />
            <path d="M59 59H78" stroke="#e4b24b" />
            <path d="M41 59V78" stroke="#d02c5a" />
          </g>
          <path d="M48 29h-7a7 7 0 1 1 7-7Z" fill="#5fc2ea" />
          <path d="M71 48v-7a7 7 0 1 1 7 7Z" fill="#52b184" />
          <path d="M52 71h7a7 7 0 1 1-7 7Z" fill="#e4b24b" />
          <path d="M29 52v7a7 7 0 1 1-7-7Z" fill="#d02c5a" />
        </Tile>
      </DockItem>
      <DockItem running>
        <Tile id="vscode" a="#ffffff" b="#ffffff">
          <path d="M66 15L84 23V77L66 85Z" fill="#4a9bea" />
          <path d="M66 15V36L21 70 14 64V61Z" fill="#2b66ad" />
          <path d="M66 85V64L21 30 14 36V39Z" fill="#3379cb" />
        </Tile>
      </DockItem>
      <div className="flex w-[42px] shrink-0 justify-center pt-[13px]">
        <i className="h-[83px] w-[2px] bg-[#2c2c2c]" />
      </div>
      <div className="flex w-[94px] shrink-0 justify-center pt-[8px]">
        <svg width="68" height="84" viewBox="0 0 68 84" className="block">
          <defs>
            <Grad id="bin" a="#e9eaeb" b="#c9cacc" />
          </defs>
          <ellipse cx="34" cy="11" rx="31" ry="8" fill="#9fa2a4" />
          <path d="M6 12l8-8 5 4 5-7 6 5 6 3 6-8 7 6 6-2 6 8-7 6-18 3-20-2Z" fill="#e8e8e8" />
          <path d="M14 9l6 7 6-6ZM36 8l8 8 5-9ZM22 15l8-5 2 7Z" fill="#666" />
          <path d="M25 9l6 2-3 3Z" fill="#4fbf90" />
          <path d="M42 7l6 4-5 4Z" fill="#7b4432" />
          <path d="M1 11q33 14 66 0L60 76q-3 7-26 7T8 76Z" fill="url(#bin)" opacity=".94" />
          <path d="M1 11q33 14 66 0" fill="none" stroke="#fff" strokeWidth="1.800" />
          <path d="M32 24l-6 12 7 18" stroke="#fff" strokeOpacity=".4" strokeWidth="3" fill="none" />
        </svg>
      </div>

      <div className="absolute left-[1988px] top-[-88px] flex h-[53px] w-[345px] items-center justify-center rounded-[9px] border border-[#c4c4c4] bg-[#ececec] pb-[2px] text-[27px] text-[#222] shadow-[0_2px_8px_rgba(0,0,0,0.22)]">
        Adobe Acrobat Reader
        <svg width="34" height="20" viewBox="0 0 34 20" className="absolute left-[155px] top-[50px]">
          <path d="M0 0H34Q28 1 25 7L19 17q-2 3-4 0L9 7Q6 1 0 0Z" fill="#ececec" />
          <path d="M2 1.500Q7 2 9 7l6 10q2 3 4 0L25 7q2-5 7-5.500" fill="none" stroke="#c4c4c4" />
        </svg>
      </div>
    </footer>
  );
}

export default function App() {
  return (
    <main className="relative h-[1800px] w-[2880px] overflow-hidden bg-black">
      <Wallpaper />
      <div className="relative flex flex-col">
        <MenuBar />
        <div className="relative z-10 mt-[1px] flex h-[1626px] items-start">
          <SafariWindow />
          <AcrobatWindow />
        </div>
        <div className="relative z-20">
          <Dock />
        </div>
      </div>
    </main>
  );
}
